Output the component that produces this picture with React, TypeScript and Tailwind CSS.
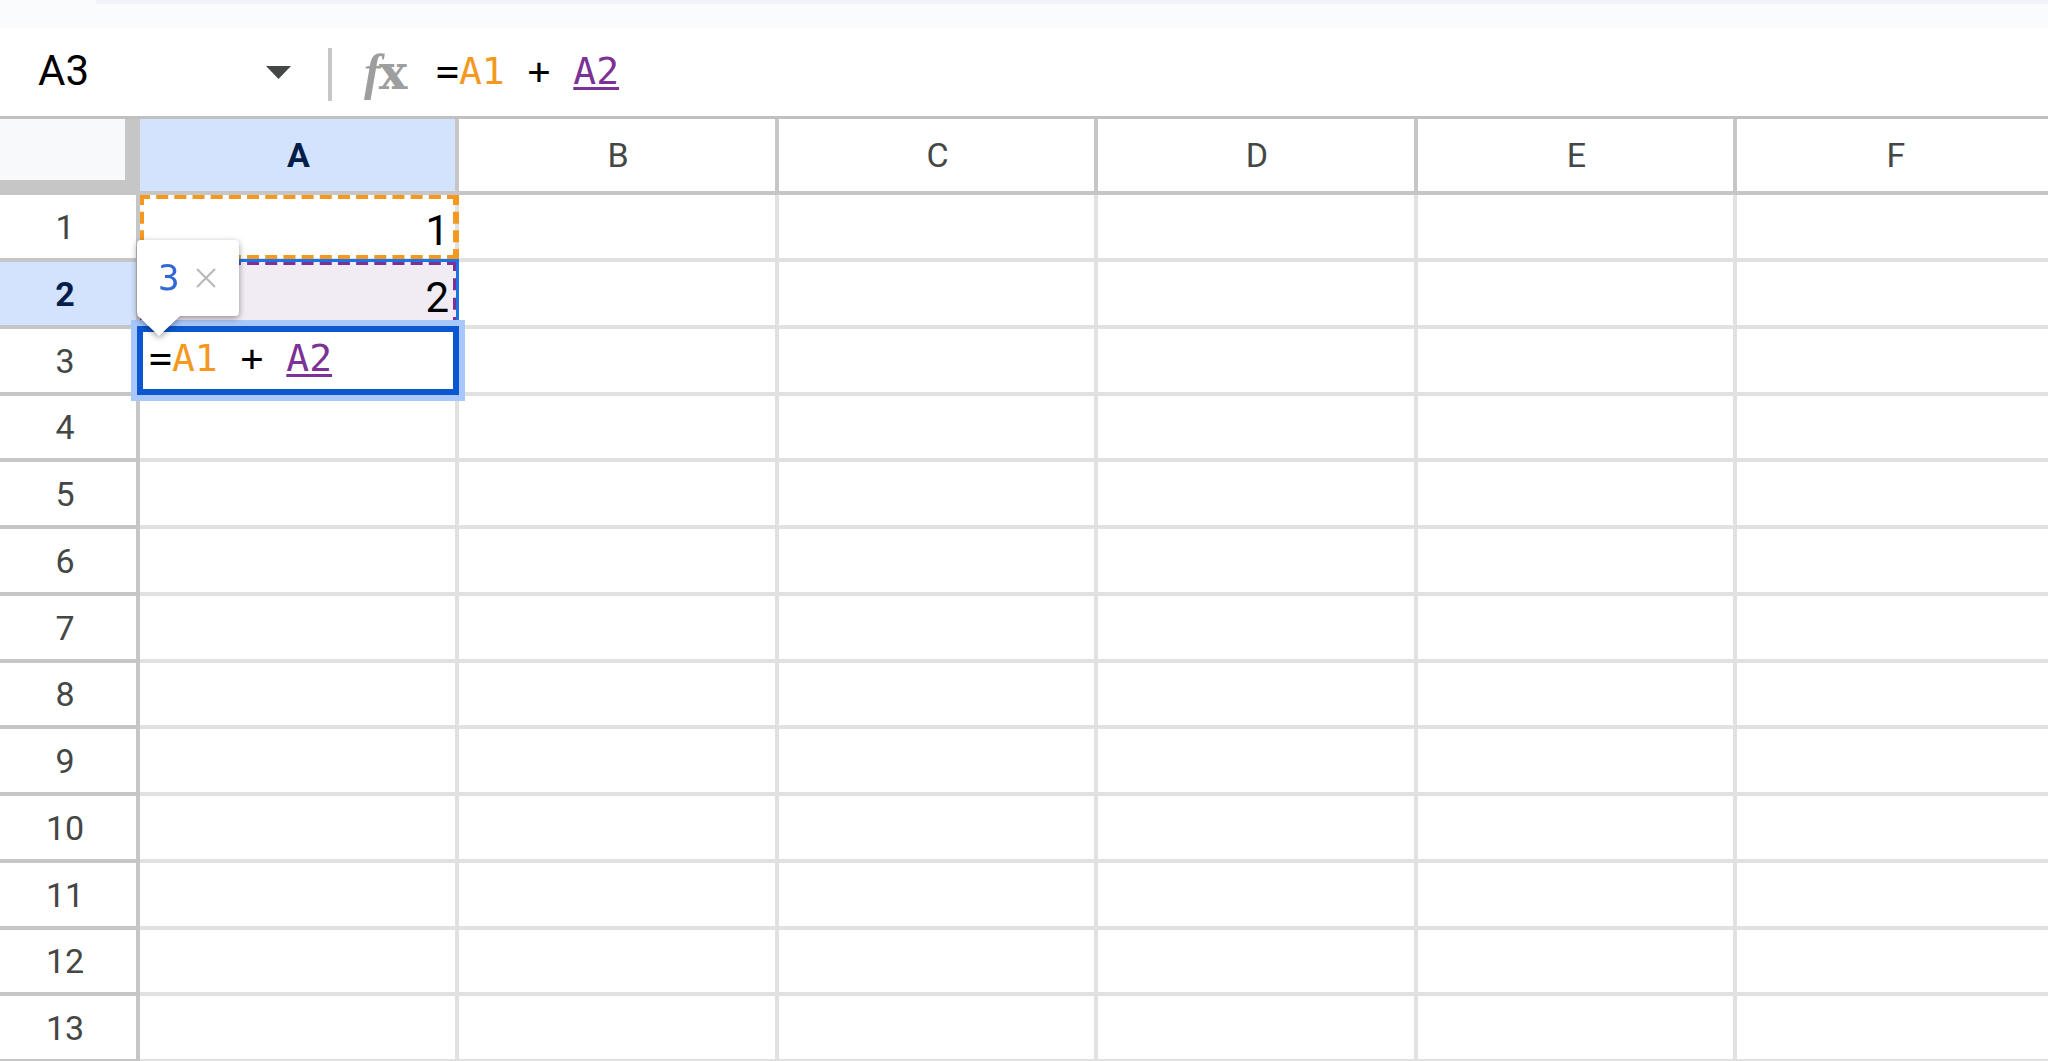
import React from 'react';

const COLUMNS = ['A', 'B', 'C', 'D', 'E', 'F'];
const ROWS = Array.from({ length: 13 }, (_, i) => i + 1);

const ACTIVE_COLUMN = 'A';
const ACTIVE_ROW = 2;

interface IFormulaProps {
  label: string;
  className?: string;
}

const Formula: React.FC<IFormulaProps> = ({ label, className = '' }) => (
  <div
    role="textbox"
    aria-label={label}
    contentEditable
    suppressContentEditableWarning
    spellCheck={false}
    className={`whitespace-pre text-left font-['DejaVu_Sans_Mono',monospace] text-[38px] leading-[44px] text-black outline-none ${className}`}
  >
    =<span className="text-[#f4981f]">A1</span>
    {' + '}
    <span className="text-[#7b3294] underline decoration-[3px] underline-offset-[3px]">A2</span>
  </div>
);

const FormulaBar = () => (
  <div className="flex h-[91px] items-center border-b-[3px] border-[#c0c0c0] bg-white">
    <input
      aria-label="Name box"
      defaultValue="A3"
      className="ml-[38px] w-[218px] bg-transparent pb-0.5 font-[Roboto,sans-serif] text-[42px] leading-[48px] text-black outline-none"
    />
    <button type="button" aria-label="Named ranges" className="flex w-11 justify-center">
      <svg width="25" height="13" viewBox="0 0 25 13" fill="#444746">
        <path d="M0 0h25L12.5 13z" />
      </svg>
    </button>
    <div className="ml-7 mt-1 h-[53px] w-1 bg-[#c7c7c7]" />
    <div className="ml-8 flex w-[72px] items-baseline leading-[48px] text-[#9e9e9e]" aria-hidden="true">
      <span className="font-['Liberation_Serif',serif] text-[50px] font-bold italic">f</span>
      <span className="-ml-0.5 font-['DejaVu_Serif',serif] text-[48px] font-bold">x</span>
    </div>
    <Formula label="Formula bar" className="flex-1 pb-0.5" />
  </div>
);

const ResultPreview = () => (
  <div className="absolute -left-[3px] -top-[89px] z-20 drop-shadow-[0_2px_3px_rgba(0,0,0,0.4)]">
    <div className="flex h-[76px] w-[102px] items-center rounded bg-white pl-[21px]">
      <span className="font-['DejaVu_Sans_Mono',monospace] text-[36px] leading-[44px] text-[#3367d6]">3</span>
      <button type="button" aria-label="Close preview" className="ml-4">
        <svg width="20" height="20" viewBox="0 0 20 20" stroke="#b7b7b7" strokeWidth="2">
          <path d="M1 1l18 18M19 1L1 19" />
        </svg>
      </button>
    </div>
    <svg width="44" height="21" viewBox="0 0 44 21" fill="#fff" className="-mt-px block">
      <path d="M0 0h44L22 21z" />
    </svg>
  </div>
);

const CellEditor = () => (
  <>
    <div className="absolute -bottom-[3px] -left-[3px] -right-1 -top-[3px] z-10 flex items-start border-[6px] border-[#0b57d0] bg-white pl-1.5 pt-1 ring-[6px] ring-[#a8c7fa]">
      <Formula label="A3" className="flex-1" />
    </div>
    <ResultPreview />
  </>
);

const FirstReference = () => (
  <div className="absolute -bottom-px -right-1 left-0 top-0 overflow-hidden">
    <div className="absolute -bottom-0.5 -left-0.5 -top-0.5 right-0 border-[6px] border-dashed border-[#f4981f]" />
  </div>
);

const SecondReference = () => (
  <div className="absolute -right-1 -top-[3px] bottom-0 left-0 overflow-hidden bg-[#f1ebf4]">
    <div className="absolute -bottom-1 -left-0.5 right-0 top-0 border-[6px] border-dashed border-[#7b3294]" />
    <div className="absolute inset-0 border-r-[3px] border-t-[3px] border-[#1a73e8]" />
  </div>
);

const renderCell = (column: string, row: number) => {
  switch (`${column}${row}`) {
    case 'A1':
      return (
        <>
          <FirstReference />
          <span className="relative">1</span>
        </>
      );
    case 'A2':
      return (
        <>
          <SecondReference />
          <span className="relative">2</span>
        </>
      );
    case 'A3':
      return <CellEditor />;
    default:
      return null;
  }
};

const Sheet = () => (
  <table className="w-[2057px] min-w-full table-fixed border-separate border-spacing-0 font-[Roboto,Arial,sans-serif]">
    <colgroup>
      <col className="w-[140px]" />
      {COLUMNS.map((column) => (
        <col key={column} className="w-[320px] even:w-[319px]" />
      ))}
    </colgroup>
    <thead>
      <tr className="h-[76px] text-[34px] leading-10 text-[#444746]">
        <td className="border-b-[15px] border-r-[15px] border-[#c6c6c6] bg-[#f8f9fa] p-0" />
        {COLUMNS.map((column) => (
          <th
            key={column}
            scope="col"
            className={`border-b-4 border-r-4 border-[#c6c6c6] py-0 pl-0.5 pr-0 ${
              column === ACTIVE_COLUMN ? 'bg-[#d3e3fd] font-bold text-[#041e49]' : 'font-normal'
            }`}
          >
            {column}
          </th>
        ))}
      </tr>
    </thead>
    <tbody>
      {ROWS.map((row) => (
        <tr key={row} className="h-[67px] nth-[4n]:h-[66px]">
          <th
            scope="row"
            className={`border-b-4 border-r-4 border-[#c6c6c6] py-0 pl-0 pr-1.5 text-[34px] leading-10 ${
              row === ACTIVE_ROW ? 'bg-[#d3e3fd] font-bold text-[#041e49]' : 'font-normal text-[#444746]'
            }`}
          >
            {row}
          </th>
          {COLUMNS.map((column) => (
            <td
              key={column}
              className="relative border-b-4 border-r-4 border-[#e1e1e1] pb-[3px] pl-0 pr-1.5 pt-0 text-right align-bottom text-[42px] leading-[48px] text-black"
            >
              {renderCell(column, row)}
            </td>
          ))}
        </tr>
      ))}
    </tbody>
  </table>
);

export default function App() {
  return (
    <div className="h-screen overflow-hidden bg-white">
      <div className="h-7 bg-[#f9fbfd]">
        <div className="ml-24 h-1 bg-[#f0f3f9]" />
      </div>
      <FormulaBar />
      <Sheet />
    </div>
  );
}
